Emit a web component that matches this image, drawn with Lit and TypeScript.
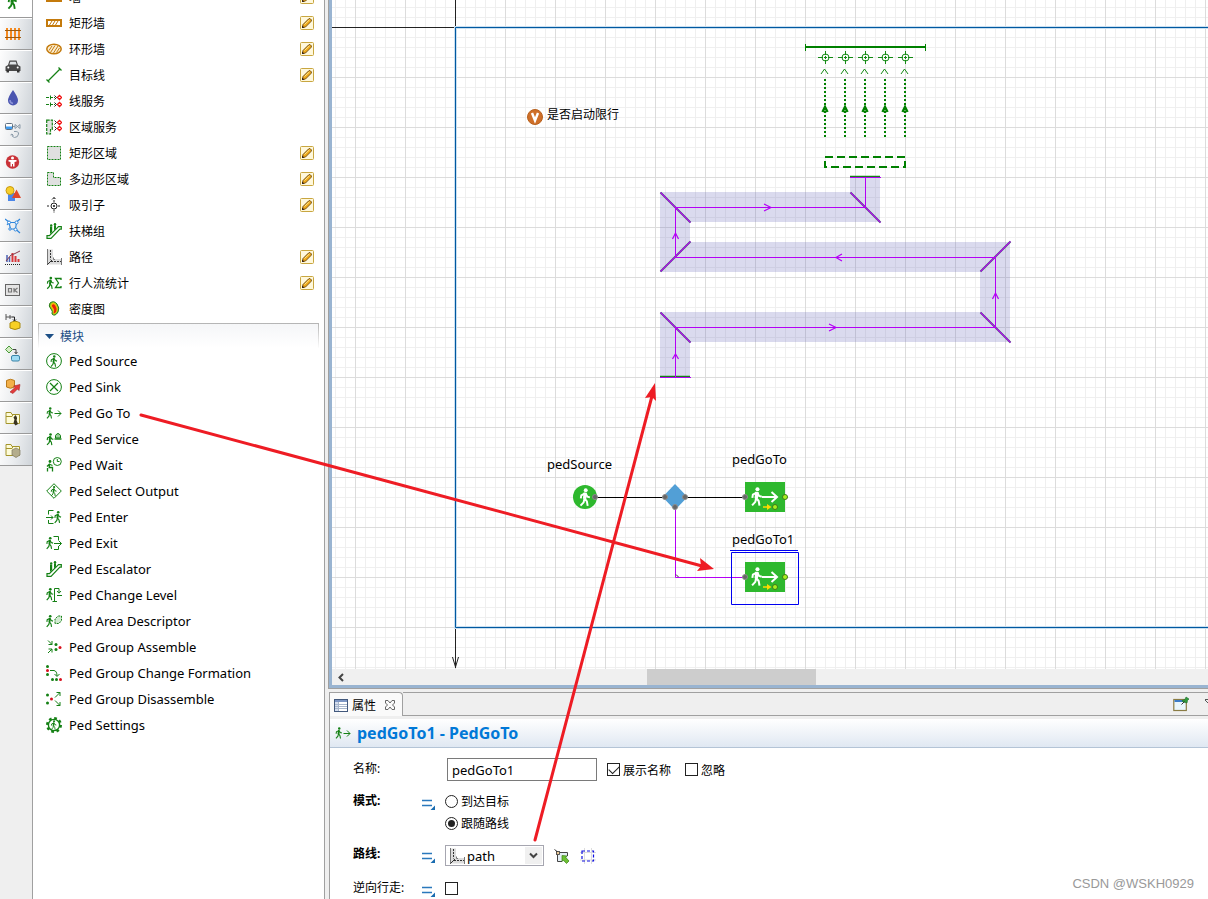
import { LitElement, html, svg, css, nothing, type SVGTemplateResult } from "lit";
import { customElement, property } from "lit/decorators.js";
import { classMap } from "lit/directives/class-map.js";

const GREEN = "#148014";

/* A walking figure, drawn 8 wide and 14 high at scale 1. */
const man = (x: number, y: number, scale = 1, color = GREEN, width = 1.3) => svg`
  <g transform="translate(${x} ${y}) scale(${scale})" fill="none" stroke=${color} stroke-width=${width}>
    <circle cx="4.8" cy="1.7" r="1.5" fill=${color} stroke="none"></circle>
    <path d="M4.4 3.6 3.9 8.4" stroke-width=${width * 1.7}></path>
    <path d="M4.2 4.2 1.4 5.6 1 8M4.8 4.4 6 6.6 8 7.2M4 8.2 5.7 10.4 6.3 13.8M3.8 8.2 3.2 11 .8 13.6"></path>
  </g>`;

const line = (d: string, color = GREEN, width = 1, dash = "") =>
  svg`<path d=${d} fill="none" stroke=${color} stroke-width=${width} stroke-dasharray=${dash || "none"}></path>`;

const dots = (points: [number, number][], color: string) =>
  points.map(([x, y]) => svg`<circle cx=${x} cy=${y} r="1.5" fill=${color}></circle>`);

const escalator = svg`
  <path d="M1 15.3V12.600H3.400L10.500 5.600 12.500 3.600H15.300V6.200H13.900L5 15.300Z" fill="#fff" stroke=${GREEN} stroke-width="1.2"></path>
  <path d="M4 3.500V11L6.200 9V3.500ZM8 2.200V7.400L10 5.400V2.200Z" fill=${GREEN}></path>
  <circle cx="5.200" cy="2.400" r="1.200" fill=${GREEN}></circle><circle cx="9" cy="1.200" r="1.200" fill=${GREEN}></circle>`;

const pathIcon = svg`
  <path d="M1 .5H7V10H15.500V15.500H1Z" fill="#dcdcdc"></path>
  ${line("M1.500 0V16M7.500 8.500V10.500H9M15.500 9V16", "#777")}
  ${line("M4.500 1V10.500M5 12.500H15", "#333", 1, "2 1")}
  ${line("M1.500 15.500 6 11", "#333")}`;

const folder = svg`<path d="M1 4.500V2.500H6L7 4.500H14.500V13.500H1Z" fill="#fdfbd8" stroke="#a4952c"></path>
  ${line("M1 6.500H7L8 4.500", "#a4952c")}`;

const icons: Record<string, SVGTemplateResult> = {
  wall: svg`<path d="M1 4H15V12H1Z" fill="#fff" stroke="#c47a0c" stroke-width="2"></path>`,
  rectWall: svg`<path d="M1 5H15V11H1Z" fill="#fff" stroke="#c47a0c" stroke-width="2"></path>
    ${line("M3.500 10 6 6M6.500 10 9 6M9.500 10 12 6", "#c47a0c")}`,
  ringWall: svg`<ellipse cx="8" cy="8" rx="7.2" ry="4.7" fill="#fbeed2" stroke="#c47a0c" stroke-width="1.5"></ellipse>
    ${line("M3 9.500 6 5M4.500 11.500 9 4.500M7.500 12 12 5M10.500 11.500 13.500 7", "#c47a0c")}`,
  targetLine: line("M2 14 14 2M.5 12.500 3.500 15.500M12.500 .5 15.500 3.500", GREEN, 1.3),
  lineService: svg`${line("M0 4.500H9M0 11.500H9", GREEN, 1.2, "3 1")}${line("M4.500 2.500V6.500M4.500 9.500V13.500", GREEN)}
    ${line("M8.500 2.500 10.500 4.500 8.500 6.500M8.500 9.500 10.500 11.500 8.500 13.500", "#222")}
    ${line("M13.500 2.500 15.500 4.500 13.500 6.500 11.500 4.500ZM13.500 9.500 15.500 11.500 13.500 13.500 11.500 11.500Z", "#f01010", 1.4)}`,
  areaService: svg`<path d="M.7 1.2H6.3V10.500H4.500V15H.7Z" fill="#e2e2e2" stroke=${GREEN} stroke-width="1.2" stroke-dasharray="3 1"></path>
    ${line("M8.500 1.500 10.500 3.500 8.500 5.500M8.500 7.500 10.500 9.500 8.500 11.500", "#222")}
    ${line("M13.500 1.500 15.500 3.500 13.500 5.500 11.500 3.500ZM13.500 7.500 15.500 9.500 13.500 11.500 11.500 9.500Z", "#f01010", 1.4)}`,
  rectArea: svg`<path d="M1.500 1.500H14.500V14.500H1.500Z" fill="#e0e0e0" stroke=${GREEN} stroke-dasharray="2 1"></path>`,
  polyArea: svg`<path d="M1.500 1.500H7.500V6.500H14.500V14.500H1.500Z" fill="#e0e0e0" stroke=${GREEN} stroke-dasharray="2 1"></path>`,
  attractor: svg`<circle cx="8" cy="9" r="3" fill="none" stroke="#222"></circle>
    <circle cx="8" cy="9" r="1.1" fill="#222"></circle>
    ${line("M1 9H4M12 9H15M8 12.500V16M8 0V5.500M6 2.500 8 .5 10 2.500", "#222", 1, "2 1")}`,
  escalator,
  path: pathIcon,
  stats: svg`${man(0.5, 1.5, 0.9)}${line("M15 5V3.500H9.500L12.500 8 9.500 12.500H15V11", GREEN, 1.3)}`,
  density: svg`<path d="M4 2Q8-1 11 3 14 7 12 11 9 16 6 13 7 10 5 8 2 5 4 2Z" fill="#8fd820" stroke="#2a7a1a"></path>
    <path d="M5 3.500Q7-.5 10 3.500 12.500 7 11 10.500 9 14 7 12.500 8 9.500 6 7.500 4 5.500 5 3.500Z" fill="#f5b60a"></path>
    <path d="M6 4Q8 2 9.500 5 11.500 8 10 11 8 13 7.500 12 9 9 7 6.800 5.500 5 6 4Z" fill="#e8200a"></path>`,
  source: svg`<circle cx="8" cy="8" r="7.4" fill="none" stroke=${GREEN}></circle>${man(4.2, 2, 0.85)}`,
  sink: svg`<circle cx="8" cy="8" r="7.4" fill="none" stroke=${GREEN}></circle>${line("M4 4 12 12M12 4 4 12", GREEN, 1.2)}`,
  goTo: svg`${man(0.3, 2.2, 0.82)}${line("M8.500 8.500H15M12 5.500 15 8.500 12 11.500")}`,
  service: svg`${man(0.3, 2, 0.88)}
    <path d="M9.500 7V4.500Q12 .5 14.500 4.500V7Z" fill="#9fcf9f" stroke=${GREEN}></path>${line("M8.500 8H15.500", GREEN, 1.4)}`,
  wait: svg`<circle cx="4" cy="4.500" r="1.400" fill=${GREEN}></circle>
    ${line("M3.500 6.500 3.200 10.500H6.500V14.500M3 7.500 1 9.500M4 7.500 6.500 8.500M1.500 11V14.500", GREEN, 1.3)}
    <circle cx="11.300" cy="4.500" r="4" fill="#fff" stroke=${GREEN}></circle>${line("M11.300 2V4.500H13.500")}`,
  select: svg`${line("M8 .7 15.300 8 8 15.300 .7 8Z")}${man(4.5, 2.8, 0.75)}`,
  enter: svg`${man(8, 1.8, 0.88)}${line("M7.500 1.500H2.500V5.500M2.500 11V14.500H7.500M0 8.500H7M5 6.500 7 8.500 5 10.500")}`,
  exit: svg`${man(0, 1.8, 0.88)}${line("M7.500 1.500H12.500V5.500M12.500 11V14.500H8M8 8.500H15.300M13 6 15.500 8.500 13 11")}`,
  level: svg`${man(0, 0.8, 0.9)}${line("M6.500 14.500H11M8.500 14.500V1.500H13V5.500M11 4 13 6.200 15 4M11 8.500H16")}`,
  descriptor: svg`${man(0, 1.8, 0.88)}
    <path d="M9 10.500V6L12 3H15.500V7.500L13 10.500Z" fill="#d3ead3" stroke=${GREEN} stroke-dasharray="2 1"></path>`,
  assemble: svg`${line("M2 1.500 6 5.500M6 2V5.500H2.500M2 14 6 10M2.500 10H6V13.500")}
    ${dots([[10, 5.5], [10, 10.5]], GREEN)}${dots([[14, 8.5]], "#d8101c")}`,
  formation: svg`${dots([[1.5, 1.5], [1.5, 9.5], [6.5, 14.5], [10.5, 14.5]], GREEN)}
    ${dots([[1.5, 5.5], [14.5, 14.5]], "#d8101c")}${line("M4 5.500H8Q11 6 11 11M8.500 9 11 11.500 13.500 9")}`,
  disassemble: svg`${dots([[1.5, 4], [1.5, 12]], GREEN)}${dots([[5.5, 8]], "#d8101c")}
    ${line("M9 6.500 14 1.500M10.500 1.500H14V5M9 9.500 14 14.500M10.500 14.500H14V11")}`,
  settings: svg`<circle cx="8" cy="8" r="6.800" fill="none" stroke=${GREEN} stroke-width="2.400" stroke-dasharray="2.700 2.640"></circle>
    <circle cx="8" cy="8" r="5.600" fill="#fff" stroke=${GREEN} stroke-width="1.400"></circle>${man(4.7, 3, 0.7)}`,

  ped: man(2.5, -1, 1.15, GREEN, 1.6),
  rail: svg`${line("M2 2V14M6 2V14M10 2V14M14 2V14", "#f58a1f", 2)}${line("M0 4.500H16M0 11.500H16", "#9a5a10", 1.2)}`,
  road: svg`<path d="M3 7 4.500 2.500H11.500L13 7 15.500 8.500V13H.5V8.500Z" fill="#484848"></path>
    <path d="M4.300 6.500 5.300 3.700H10.700L11.700 6.500Z" fill="#dfe3e6"></path>
    <path d="M1.500 12H4V14.500H1.500ZM12 12H14.500V14.500H12Z" fill="#333"></path>
    <circle cx="3.300" cy="9.500" r="1" fill="#fff"></circle><circle cx="12.700" cy="9.500" r="1" fill="#fff"></circle>`,
  fluid: svg`<path d="M8 0Q13 7 13 10.500A5 5 0 0 1 3 10.500Q3 7 8 0Z" fill="#4a55b0"></path>
    <path d="M5 10Q5 13 8 13.500" fill="none" stroke="#8b93d8" stroke-width="1.500"></path>`,
  dynamics: svg`<rect x=".5" y="1.500" width="7" height="6" rx="1" fill="#fff" stroke="#607080"></rect>
    <path d="M1 4.500H7V7H1Z" fill="#3f9cf0"></path>
    ${line("M8 4.500H10M10 2.500 15 6.500V2.500L10 6.500ZM9 9.500Q14 9 13.500 12 13 15.500 9.500 15.500 6.500 15 7 12L5.500 13M7 12 8.500 13.500", "#8a9aa8")}`,
  person: svg`<circle cx="7.500" cy="8" r="6.700" fill="#c93238"></circle><circle cx="7.500" cy="4" r="1.500" fill="#fff"></circle>
    <path d="M3.500 6H11.500V7.500L9.500 8V12.500H8V10H7V12.500H5.500V8L3.500 7.500Z" fill="#fff"></path>`,
  shapes: svg`<path d="M3 7H10V15H3Z" fill="#4a86e8"></path><circle cx="5" cy="4.500" r="4" fill="#f7cf2a" stroke="#c99a10"></circle>
    <path d="M11.500 3.500 16 12H7Z" fill="#e2462a"></path>`,
  space: svg`${line("M0 1 4 4M15 1 11.500 4M4 4.500H11.500L10.500 11H5.500ZM10.500 11 15 15M4 4.500 2 7", "#2f86dc", 1.2)}
    <g fill="#fff" stroke="#2f86dc"><circle cx="4" cy="4.500" r="1.500"></circle><circle cx="11.500" cy="4.500" r="1.500"></circle>
    <circle cx="10.500" cy="11.500" r="1.500"></circle><circle cx="5" cy="11" r="1.200"></circle></g>`,
  chart: svg`${line("M2 5V12M4.500 7V12", "#4a62b4", 1.5)}${line("M7.500 3V12M10.500 6V12M13.500 9V12", "#d8383c", 2)}
    ${line("M1 11 6 5 9 4 15 1", "#8a3a4a")}${line("M0 14.500H16", "#222", 1, "1 1")}`,
  controls: svg`<rect x=".5" y="2.500" width="14" height="11" fill="#e4e4e4" stroke="#666"></rect>
    ${line("M3.500 6.500H6.500V10H3.500ZM9 6V10.500M12.500 6 9.500 8.200 12.500 10.500", "#777", 1.2)}`,
  stateA: svg`${line("M1 0V6M1 3H7M5 1V5", "#555")}${line("M7 3H9.500V7M8 5.500 9.500 7 11 5.500", "#222")}
    <path d="M5 9Q10 5.500 15 9V14Q10 17 5 14Z" fill="#f7d023" stroke="#a88a10"></path>`,
  stateB: svg`<path d="M4 0 7.500 3.500 4 7 .5 3.500Z" fill="#d4ecc4" stroke="#4a9a3a"></path>
    ${line("M8 3.500H11V8M9.500 6 11 7.500 12.500 6", "#444")}
    <rect x="6.500" y="9.500" width="8" height="5.500" rx="1.500" fill="#9fdcf4" stroke="#3a84a8"></rect>`,
  external: svg`<path d="M1.500 2.500Q5.500 0 9.500 2.500V9Q5.500 11.500 1.500 9Z" fill="#f3b04a" stroke="#b87a1c"></path>
    <path d="M5 14 10 9.500 8.500 8 15 6.500 14 12.500 12.500 11 8 15.500Z" fill="#e23c3c" stroke="#a82828" stroke-width=".6"></path>`,
  folderA: svg`${folder}<path d="M10.500 5Q13 8 11.500 10L13 14 10.500 15.500 8.500 13 9.500 9.500 8.500 7.500Z" fill="#3a3420"></path>`,
  folderB: svg`${folder}<path d="M7 8 11 6 15 8V13L11 15.500 7 13Z" fill="#b4ad8c" stroke="#807a60" stroke-width=".7"></path>`,

  table: svg`<rect x=".5" y="1.500" width="13" height="12" fill="#fff" stroke="#42587c"></rect>
    <path d="M1 2H13V4H1Z" fill="#7d96c4"></path><path d="M1 4H4V13H1Z" fill="#d5deee"></path>
    ${line("M4.500 4V13M1 6.500H13M1 8.500H13M1 10.500H13", "#a8b6cc")}`,
  close: line("M1.500 1.500H4L6 4 8 1.500H10.500V4L8.500 6 10.500 8V10.500H8L6 8 4 10.500H1.500V8L3.500 6 1.500 4Z", "#666"),
  pin: svg`<rect x=".8" y="3.500" width="12.500" height="11" fill="#eaf7fc" stroke="#8a7c44" stroke-width="1.200"></rect>
    <path d="M1.500 4H10V6H1.500Z" fill="#3c7cc8"></path>
    <path d="M10 6 9 4.500 12 3.500 13 1 16 3 14.500 4.500 14 7Z" fill="#2f9c3c" stroke="#1c6c28" stroke-width=".6"></path>
    ${line("M8.500 8.500 11.500 5.500", "#333")}`,
  param: svg`${line("M0 4.500H10M0 9.500H10", "#2a78bc", 1.4)}<path d="M13 9.500V14H8.500Z" fill="#1a6cb0"></path>`,
  pick: svg`<rect x="3.500" y="4.500" width="10" height="9" fill="#e4eef5"></rect>
    ${line("M3.500 7V13.500H8M6 4.500H13.500V8", "#444")}
    ${line("M.5 1.500 5 5", "#333")}<rect x="2.500" y="3.500" width="3" height="3" fill="#e8c898" stroke="#333" stroke-width=".8"></rect>
    <path d="M8 7.500 13 8 11.800 9.500 15 13 12.500 15.500 9.200 12 8 13.500Z" fill="#6cc034" stroke="#3a8014" stroke-width=".7"></path>`,
  frame: svg`${line("M4.500 0V16M11.500 0V16M0 4.500H16M0 12H16", "#ddd")}
    <rect x="2" y="3" width="11.500" height="10" fill="none" stroke="#1010e0" stroke-width="1.200" stroke-dasharray="3 2"></rect>`,
  pencil: svg`<rect x=".5" y=".5" width="13" height="13" rx="1" fill="#fff8dc" stroke="#c8a640"></rect>
    <path d="M3 8.500 8.500 3 10 2.500 11.500 4 11 5.500 5.500 11 2.500 11.500Z" fill="#f0a818" stroke="#6a4810" stroke-width=".9"></path>
    ${line("M4.500 8.500 9.500 3.800", "#ffe890")}<path d="M2 12V9.500L4.500 11.700Z" fill="#3a2410"></path>`,
};

const glyph = (name: string, size = 16, box = size) =>
  html`<svg width=${size} height=${size} viewBox="0 0 ${box} ${box}" aria-hidden="true">${icons[name]}</svg>`;

const base = css`
  * { box-sizing: border-box; }
  svg { display: block; flex: none; }
  button { font: inherit; color: inherit; border: 0; background: none; padding: 0; margin: 0; }
`;

@customElement("palette-rail")
class PaletteRail extends LitElement {
  static styles = [base, css`
    :host { display: block; background: #efefef; border-right: 1px solid #a0a0a0; overflow: hidden; }
    nav { display: flex; flex-direction: column; margin-top: -14px; }
    .tab {
      display: flex; align-items: center; height: 32px; padding-left: 5px; width: 100%;
      border-bottom: 1px solid #9a9a9a; border-top: 1px solid #fff;
      background: linear-gradient(100deg, #fdfdfd, #eceef0 45%, #cfd4d9);
    }
    .tab.active { background: #fff; }
  `];
  private tabs = ["ped", "rail", "road", "fluid", "dynamics", "person", "shapes", "space", "chart",
    "controls", "stateA", "stateB", "external", "folderA", "folderB"];
  render() {
    return html`<nav>${this.tabs.map((t, i) => html`
      <button class=${classMap({ tab: true, active: i === 0 })} aria-label=${t}>${glyph(t)}</button>`)}</nav>`;
  }
}

type Entry = [icon: string, label: string, editable?: boolean];

@customElement("palette-list")
class PaletteList extends LitElement {
  static styles = [base, css`
    :host { display: block; background: #fff; overflow: hidden; font-size: 12px; padding-right: 5px; }
    .scroll { margin-top: -16px; }
    ul { list-style: none; margin: 0; padding: 0; }
    li { display: flex; align-items: center; height: 26px; padding: 0 5px 0 13px; }
    .name { flex: 1; text-align: left; padding: 2px 0 0 7px; line-height: 16px; }
    .latin { font-size: 13px; padding-top: 0; }
    .group {
      display: flex; align-items: center; gap: 6px; width: auto; height: 25px; margin: 1px 0 0 5px; padding: 1px 0 0 6px;
      color: #1c4f86; line-height: 16px;
      border: 1px solid #b4b4b4; border-bottom: 0;
      border-image: linear-gradient(#b4b4b4, #fff) 1;
      background: linear-gradient(#f5f6f8, #fff);
    }
  `];
  private markup: Entry[] = [
    ["wall", "墙", true], ["rectWall", "矩形墙", true], ["ringWall", "环形墙", true], ["targetLine", "目标线", true],
    ["lineService", "线服务"], ["areaService", "区域服务"], ["rectArea", "矩形区域", true],
    ["polyArea", "多边形区域", true], ["attractor", "吸引子", true], ["escalator", "扶梯组"],
    ["path", "路径", true], ["stats", "行人流统计", true], ["density", "密度图"],
  ];
  private blocks: Entry[] = [
    ["source", "Ped Source"], ["sink", "Ped Sink"], ["goTo", "Ped Go To"], ["service", "Ped Service"],
    ["wait", "Ped Wait"], ["select", "Ped Select Output"], ["enter", "Ped Enter"], ["exit", "Ped Exit"],
    ["escalator", "Ped Escalator"], ["level", "Ped Change Level"], ["descriptor", "Ped Area Descriptor"],
    ["assemble", "Ped Group Assemble"], ["formation", "Ped Group Change Formation"],
    ["disassemble", "Ped Group Disassemble"], ["settings", "Ped Settings"],
  ];
  private rows(entries: Entry[], latin: boolean) {
    return html`<ul>${entries.map(([icon, label, editable]) => html`
      <li>${glyph(icon)}<button class=${classMap({ name: true, latin })}>${label}</button>
        ${editable ? html`<button aria-label="edit">${glyph("pencil", 14)}</button>` : nothing}</li>`)}</ul>`;
  }
  render() {
    return html`<div class="scroll">
      ${this.rows(this.markup, false)}
      <div class="group"><svg width="9" height="6"><path d="M0 0H9L4.500 5Z" fill="#1c4f86"></path></svg>模块</div>
      ${this.rows(this.blocks, true)}
    </div>`;
  }
}

@customElement("flow-canvas")
class FlowCanvas extends LitElement {
  static styles = [base, css`
    :host { display: flex; flex-direction: column; min-height: 0; border: solid #99b4d1; border-width: 0 0 3px 3px; overflow: hidden; }
    .sheet { flex: 1; min-height: 0; width: 100%; background: #fff; }
    .bar { display: flex; height: 16px; background: #f0f0f0; flex: none; }
    .bar button { width: 17px; display: grid; place-items: center; }
    .track { flex: 1; display: grid; grid-template-columns: 298fr 169fr 392fr; }
    .thumb { grid-column: 2; background: #cdcdcd; }
    text { font-size: 13px; fill: #000; }
    .zh { font-size: 12px; }
  `];
  private port = (x: number, y: number, open = false) => svg`
    <circle cx=${x} cy=${y} r="2.500" fill=${open ? "#a6f020" : "#666"} stroke=${open ? "#3f7a18" : "#8c8c8c"}></circle>`;

  private block = (y: number) => svg`
    <rect x="745" y=${y - 15} width="40" height="30" fill="#2eb82e"></rect>
    ${man(751, y - 10, 1.35, "#fff", 1.5)}
    <path d="M762 ${y}H777M771.500 ${y - 5} 777 ${y} 771.500 ${y + 5}" fill="none" stroke="#fff" stroke-width="2"></path>
    <path d="M763 ${y + 10}H768" stroke="#ffd800" stroke-width="1.500"></path>
    <path d="M767 ${y + 7}V${y + 13}L771.500 ${y + 10}Z" fill="#ffd800"></path>
    ${this.port(775, y + 10, true)}${this.port(785, y, true)}`;

  private queue = (x: number) => svg`
    <g fill="none" stroke="#148a14">
      <circle cx=${x + 0.5} cy="57.500" r="3.500"></circle>
      <path d="M${x - 7} 57.500h5M${x + 3} 57.500h5M${x + 0.5} 51v4M${x + 0.5} 60v4M${x - 1} 57.500h3M${x + 0.5} 56v3"></path>
      <path d="M${x - 4} 74 ${x - 0.5} 69 ${x + 3} 74"></path>
      <path d="M${x} 79V137" stroke="#008000" stroke-width="2" stroke-dasharray="2 2"></path>
      <path d="M${x - 2.5} 112 ${x} 107 ${x + 2.5} 112" stroke="#008000" stroke-width="2.500"></path>
    </g>`;

  render() {
    const purple = "#b400f5";
    const walls = ["M660.500 192.500 690.500 222.500", "M850.500 192.500 880.500 222.500", "M660.500 271.500 690.500 241.500",
      "M980.500 271.500 1010.500 241.500", "M660.500 312.500 690.500 342.500", "M980.500 312.500 1010.500 342.500"];
    return html`
      <svg class="sheet" role="img" aria-label="流程图">
        <defs>
          <pattern id="minor" width="10" height="10" x="335" y="7" patternUnits="userSpaceOnUse">
            <path d="M.5 0V10M0 .5H10" stroke="#efefef"></path>
          </pattern>
          <pattern id="major" width="50" height="50" x="355" y="27" patternUnits="userSpaceOnUse">
            <path d="M.5 0V50M0 .5H50" stroke="#dcdcdc"></path>
          </pattern>
        </defs>
        <g transform="translate(-332 0)">
          <rect x="332" width="4000" height="4000" fill="url(#minor)"></rect>
          <rect x="332" width="4000" height="4000" fill="url(#major)"></rect>
          ${line("M455.500 0V27.500H332M455.500 628V668M452.500 657 455.500 667 458.500 657", "#222")}
          ${line("M4332 27.500H455.500V627.500H4332", "#c9dff0", 3)}
          ${line("M4332 27.500H455.500V627.500H4332", "#0058a0")}

          ${line("M805 47H925", "#008000", 2)}${line("M805.500 44V51M925.500 44V51", "#008000")}
          ${[825, 845, 865, 885, 905].map(this.queue)}
          <rect x="825" y="157" width="80" height="10" fill="none" stroke="#008000" stroke-width="2" stroke-dasharray="8 4"></rect>

          <path d="M660 377V312H980V272H660V192H850V177H880V222H690V242H1010V342H690V377Z" fill="#6b6bbb" fill-opacity=".25"></path>
          ${walls.map((d) => svg`${line(d, "#3f8a5a", 2)}${line(d, purple, 1.3)}`)}
          ${line("M850 176.500H880M660 376.500H690", "#148014", 1.5)}
          ${line("M660 377.500H691M850 177.500H881M675.500 377V327.500H995.500V257.500H675.500V207.500H865.500V177", purple)}
          ${line("M672.500 359 675.500 354 678.500 359M672.500 239 675.500 233 678.500 239M992.500 299 995.500 293 998.500 299M829 324 836 327.500 829 331M764 204 771 207.500 764 211M842 254 836 257.500 842 261", purple, 1.2)}

          <circle cx="535" cy="117" r="7.500" fill="#cf6f28" stroke="#b8601c"></circle>
          ${line("M532 113 535 120.500 538 113", "#fff", 2.4)}
          <text class="zh" x="547" y="119">是否启动限行</text>

          ${line("M595 497.500H665M685 497.500H745", "#000", 1.2)}
          ${line("M675.500 507V577.500H745", purple)}${line("M676 574.500 678.500 577", "#333")}
          <circle cx="585" cy="497" r="12" fill="#2eb82e"></circle>${man(579.5, 488, 1.3, "#fff", 1.5)}
          <path d="M675 484 687.500 497 675 510 662.500 497Z" fill="#529fd6"></path>
          ${this.port(595, 497)}${this.port(665, 497)}${this.port(685, 497)}${this.port(675, 507)}
          ${this.block(497)}${this.port(745, 497)}
          ${this.block(577)}${this.port(745, 577)}
          <path d="M730 550.500H798M731.500 552.500H798.500V604.500H731.500Z" fill="none" stroke="#0000f0"></path>
          <text x="547" y="469">pedSource</text>
          <text x="732" y="464">pedGoTo</text>
          <text x="732" y="544">pedGoTo1</text>
        </g>
      </svg>
      <div class="bar">
        <button aria-label="scroll left"><svg width="6" height="9"><path d="M5 1 1.500 4.500 5 8" fill="none" stroke="#444" stroke-width="2"></path></svg></button>
        <div class="track"><div class="thumb"></div></div>
      </div>`;
  }
}

@customElement("property-sheet")
class PropertySheet extends LitElement {
  @property() name = "pedGoTo1";
  static styles = [base, css`
    :host { display: block; border-left: 1px solid #a0a0a0; font-size: 12px; background: #fff; min-width: 0; }
    .tabs { display: flex; height: 27px; background: #efefef; border-bottom: 3px solid #efefef; }
    .tab {
      display: flex; align-items: center; gap: 4px; padding: 0 6px 0 4px; width: 73px; border: 1px solid #a0a0a0;
      border-width: 1px 1px 0 0; border-radius: 0 4px 0 0; background: #fafafa;
    }
    .tab button { margin-left: auto; }
    .rest { flex: 1; display: flex; align-items: center; justify-content: flex-end; gap: 16px; border: solid #a0a0a0; border-width: 1px 0; }
    header {
      display: flex; align-items: center; gap: 6px; height: 29px; padding-left: 5px;
      background: linear-gradient(#fff, #e0e8f2); border-bottom: 1px solid #b4c4d6;
    }
    h2 { margin: 0; font-size: 16px; line-height: 24px; font-weight: 700; color: #0078d7; }
    form { display: grid; grid-template-columns: 69px 23px 1fr; padding: 10px 0 0 23px; row-gap: 9px; align-items: start; }
    .cap { line-height: 22px; }
    .strong { font-weight: 700; }
    .param { padding-top: 6px; }
    .ctl { display: flex; align-items: center; min-height: 22px; }
    .wide { grid-column: 2 / 4; padding-left: 25px; gap: 10px; }
    .wide .opt { padding-right: 4px; }
    .stack { flex-direction: column; align-items: stretch; }
    .opt { display: flex; align-items: center; gap: 3px; height: 22px; }
    .text { font: inherit; font-size: 13px; width: 150px; height: 23px; padding: 0 4px; border: 1px solid #7a7a7a; border-radius: 0; outline: 0; }
    .tick, .radio { appearance: none; width: 13px; height: 13px; margin: 0; border: 1px solid #222; background: #fff; display: grid; place-items: center; flex: none; }
    .radio { border-radius: 50%; }
    .radio:checked::after { content: ""; width: 7px; height: 7px; border-radius: 50%; background: #222; }
    .tick:checked::after { content: ""; width: 9px; height: 5px; border: solid #222; border-width: 0 0 1px 1px; transform: rotate(-45deg) translate(1px, -1px); }
    .drop { display: flex; align-items: center; width: 99px; height: 21px; border: 1px solid #a6a6b0; padding: 1px 1px 1px 3px; }
    .drop select { appearance: none; border: 0; background: none; font: inherit; font-size: 13px; flex: 1; min-width: 0; padding: 0 0 0 2px; outline: 0; color: #000; }
    .arrow { width: 17px; height: 17px; background: #f0f0f0; display: grid; place-items: center; pointer-events: none; }
    .tools { gap: 10px; height: 25px; }
  `];
  private param = html`<button type="button" class="param" aria-label="fx">${glyph("param")}</button>`;
  render() {
    return html`
      <div class="tabs">
        <div class="tab">${glyph("table", 14)}<span>属性</span><button aria-label="close">${glyph("close", 12)}</button></div>
        <div class="rest">
          <button aria-label="pin">${glyph("pin")}</button>
          <svg width="3" height="12"><path d="M0 1.500H3M0 2 3 5" stroke="#555" fill="none"></path></svg>
        </div>
      </div>
      <header>${glyph("goTo")}<h2>${this.name} - PedGoTo</h2></header>
      <form>
        <label class="cap" for="name">名称:</label>
        <div class="ctl wide">
          <input class="text" id="name" .value=${this.name} />
          <label class="opt"><input class="tick" type="checkbox" checked />展示名称</label>
          <label class="opt"><input class="tick" type="checkbox" />忽略</label>
        </div>
        <span class="cap strong">模式:</span>${this.param}
        <div class="ctl stack">
          <label class="opt"><input class="radio" type="radio" name="mode" />到达目标</label>
          <label class="opt"><input class="radio" type="radio" name="mode" checked />跟随路线</label>
        </div>
        <label class="cap strong" for="route">路线:</label>${this.param}
        <div class="ctl tools">
          <div class="drop">${glyph("path")}
            <select id="route"><option>path</option></select>
            <span class="arrow"><svg width="9" height="7"><path d="M1 1.500 4.500 5 8 1.500" fill="none" stroke="#444" stroke-width="2"></path></svg></span>
          </div>
          <button type="button" aria-label="pick">${glyph("pick")}</button>
          <button type="button" aria-label="frame">${glyph("frame")}</button>
        </div>
        <label class="cap" for="reverse">逆向行走:</label>${this.param}
        <div class="ctl"><input class="tick" id="reverse" type="checkbox" /></div>
      </form>`;
  }
}

@customElement("app-root")
class AppRoot extends LitElement {
  static styles = [base, css`
    :host {
      display: grid; grid-template-columns: 33px 291px minmax(0, 1fr); height: 100vh; overflow: hidden; position: relative;
      background: #efefef; color: #000; font-family: "Noto Sans", "Noto Sans CJK SC", sans-serif;
    }
    .work { display: grid; grid-template-rows: minmax(0, 1fr) auto; gap: 4px; min-height: 0; padding-left: 4px; border-left: 1px solid #a0a0a0; }
    flow-canvas { outline: 1px solid #a0a0a0; }
    .notes { position: absolute; inset: 0; width: 100%; height: 100%; pointer-events: none; }
    .mark { position: absolute; right: 14px; bottom: 5px; font: 13px/20px "Liberation Sans", sans-serif; color: #999; }
  `];
  render() {
    return html`
      <palette-rail></palette-rail>
      <palette-list></palette-list>
      <main class="work">
        <flow-canvas></flow-canvas>
        <property-sheet></property-sheet>
      </main>
      <svg class="notes" aria-hidden="true">
        <g stroke="#ee1c24" stroke-width="3" stroke-linecap="round">
          <path d="M141 415 702 566M535 840 652 396"></path>
        </g>
        <path d="M714 569 697 571 701 566 700 558ZM655 383 656 401 652 397 645 398Z" fill="#ee1c24"></path>
      </svg>
      <span class="mark">CSDN @WSKH0929</span>`;
  }
}
